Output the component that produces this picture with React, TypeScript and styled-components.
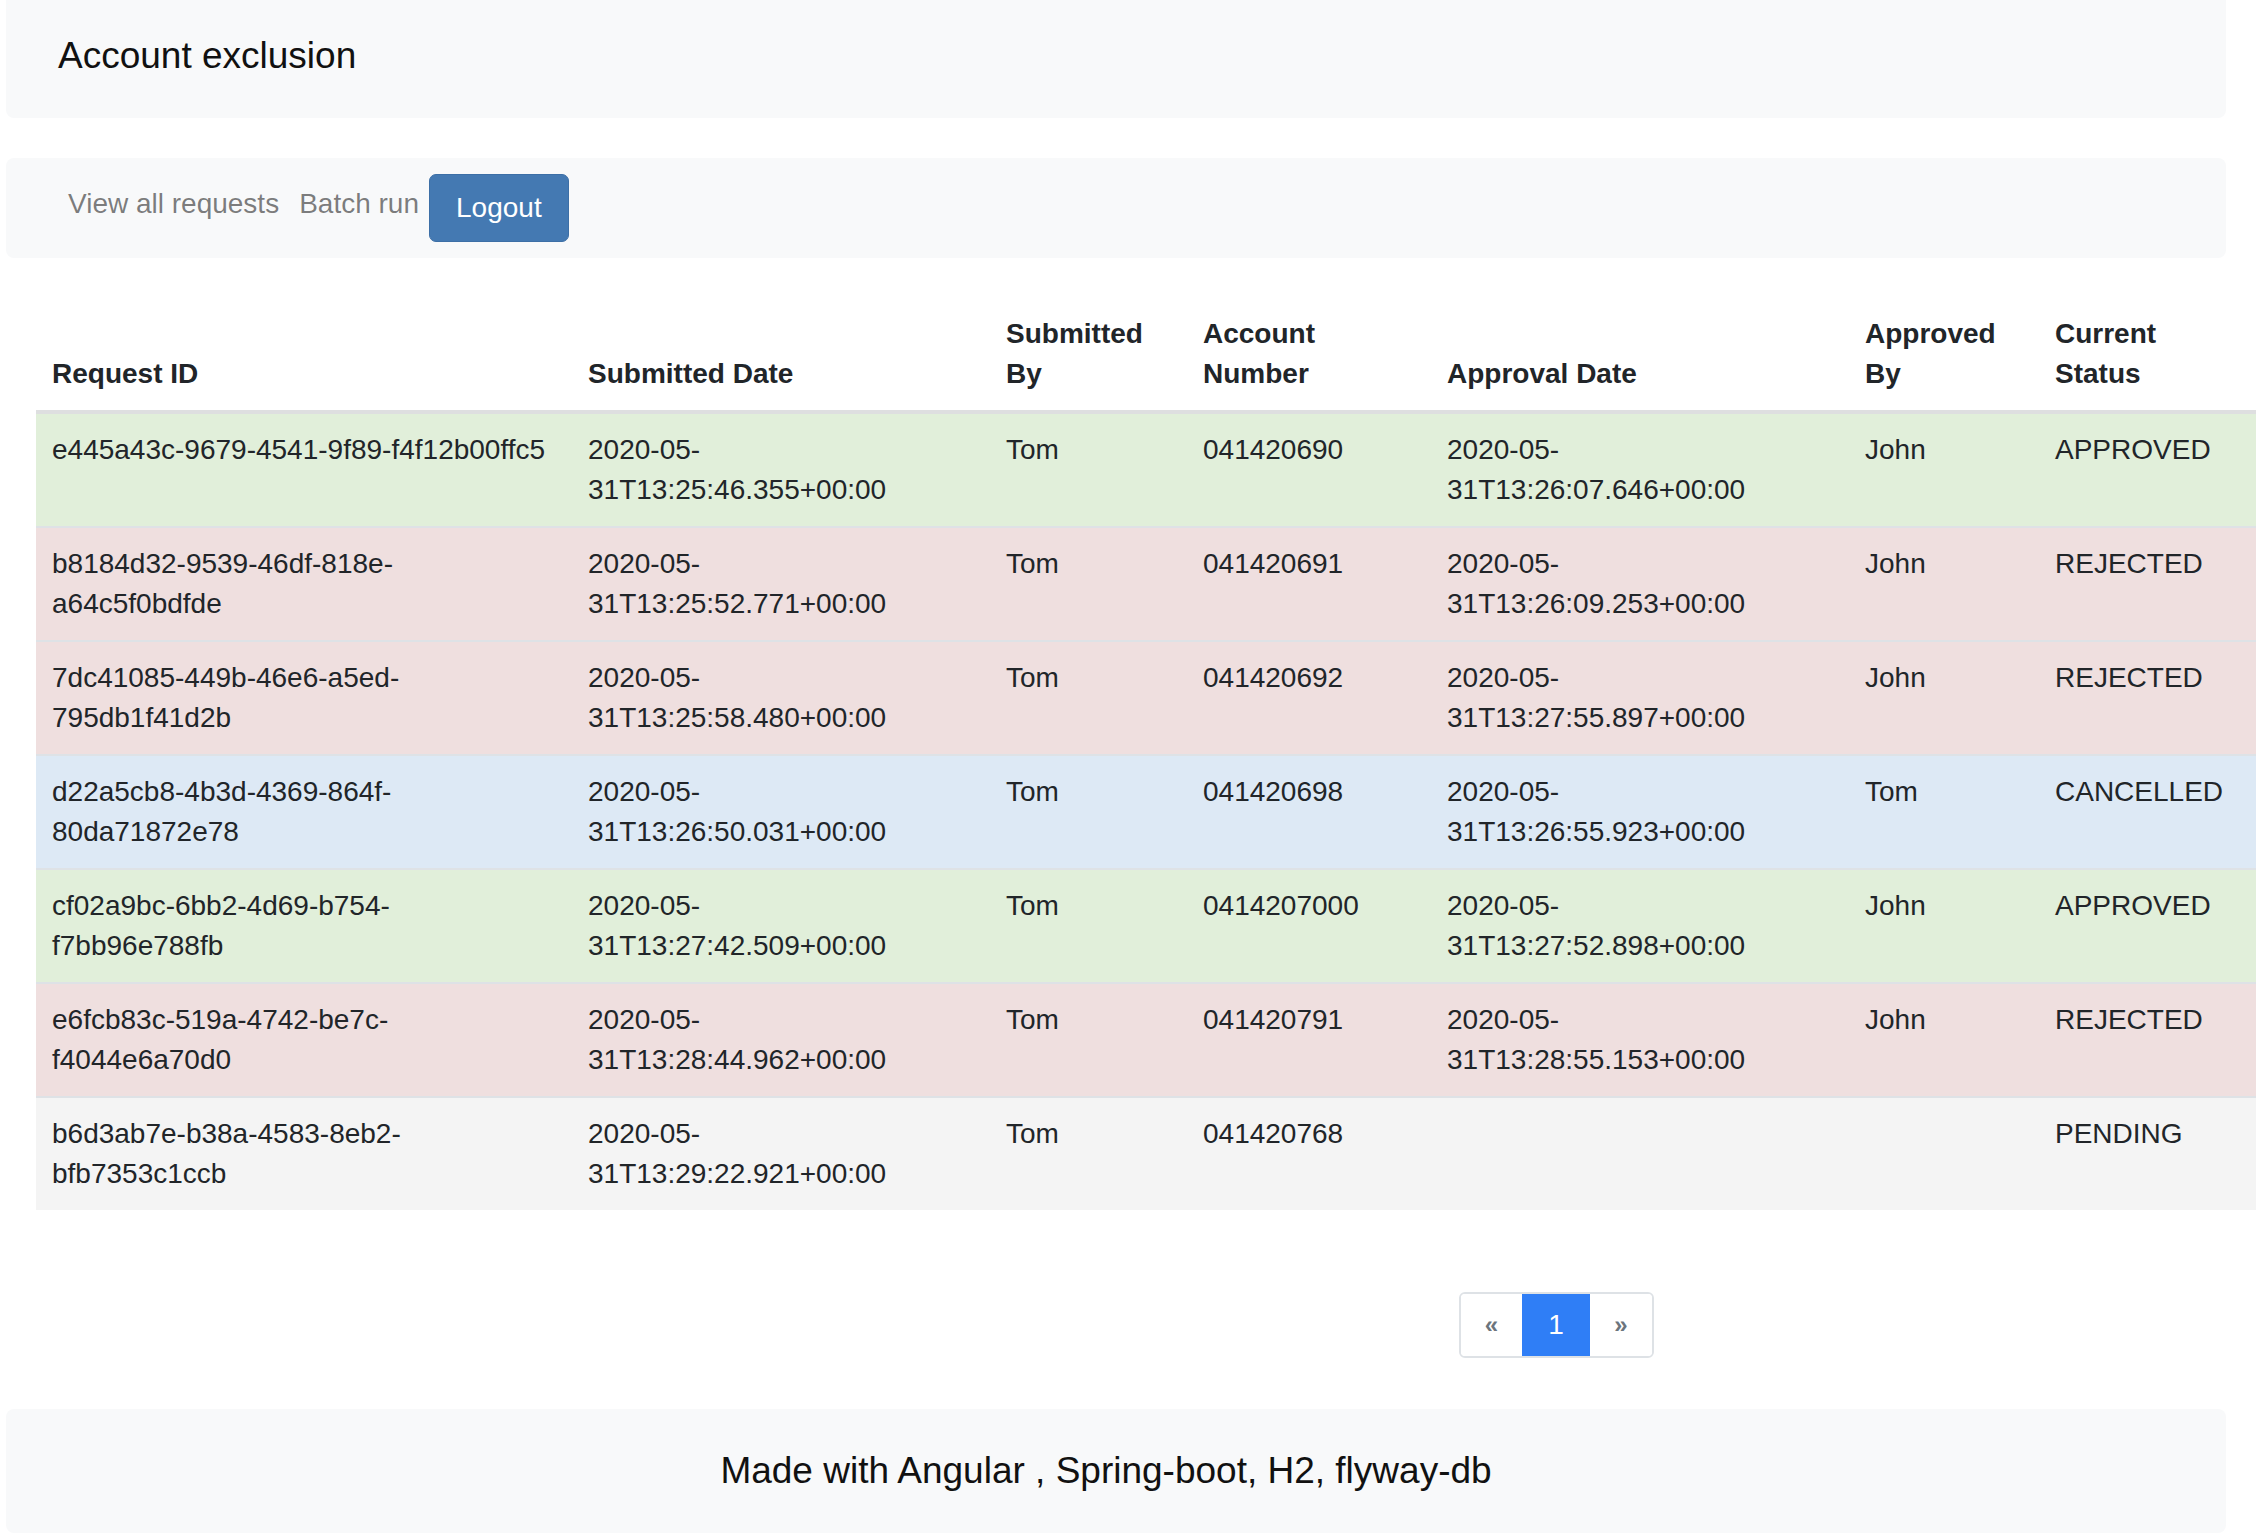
import React from "react";
import styled, { createGlobalStyle } from "styled-components";

const GlobalStyle = createGlobalStyle`
  html, body {
    margin: 0;
    padding: 0;
    background: #ffffff;
  }
  body {
    font-family: "Liberation Sans", Arial, Helvetica, sans-serif;
    color: #212529;
    overflow: hidden;
  }
`;

const Page = styled.div`
  width: 2260px;
  padding-left: 6px;
  box-sizing: border-box;
`;

const Header = styled.header`
  width: 2220px;
  height: 118px;
  box-sizing: border-box;
  background: #f8f9fa;
  border-radius: 0 0 8px 8px;
  padding: 34px 0 0 52px;
`;

const Title = styled.h1`
  margin: 0;
  font-size: 37px;
  line-height: 43px;
  font-weight: 400;
  color: #111;
`;

const NavBar = styled.nav`
  width: 2220px;
  height: 100px;
  margin-top: 40px;
  box-sizing: border-box;
  background: #f8f9fa;
  border-radius: 8px;
  padding-left: 52px;
  display: flex;
  align-items: center;
`;

const NavLink = styled.a`
  font-size: 28px;
  line-height: 40px;
  padding: 0 10px 8px;
  color: rgba(0, 0, 0, 0.52);
  text-decoration: none;
  cursor: pointer;
`;

const LogoutButton = styled.button`
  height: 68px;
  padding: 0 26px;
  font-family: inherit;
  font-size: 28px;
  color: #fff;
  background: #4479b2;
  border: 1px solid #3d6fa6;
  border-radius: 7px;
  display: inline-flex;
  align-items: center;
  cursor: pointer;
`;

const TableWrap = styled.section`
  margin-top: 40px;
  margin-left: 30px;
  width: 2220px;
`;

const Table = styled.table`
  width: 2220px;
  border-collapse: separate;
  border-spacing: 0;
  table-layout: fixed;
  font-size: 28px;
  line-height: 40px;
  color: #212529;

  tbody tr + tr td {
    border-top: 2px solid #dee2e6;
  }
`;

const HeadCell = styled.th`
  text-align: left;
  vertical-align: bottom;
  font-weight: 700;
  padding: 16px 16px;
  border-bottom: 4px solid #dedfe0;
`;

const rowColors: Record<string, string> = {
  APPROVED: "#e1efda",
  REJECTED: "#efdfdf",
  CANCELLED: "#dde9f5",
  PENDING: "#f4f4f4",
};

const Row = styled.tr<{ $status: string }>`
  background: ${(p) => rowColors[p.$status] || "#fff"};
`;

const Cell = styled.td`
  vertical-align: top;
  padding: 16px 16px;
`;

const PagerRow = styled.div`
  margin-top: 82px;
  display: flex;
`;

const Pager = styled.ul`
  list-style: none;
  margin: 0 0 0 1423px;
  padding: 0;
  display: flex;
  border: 2px solid #dee2e6;
  border-radius: 6px;
  overflow: hidden;
  height: 66px;
  box-sizing: border-box;
`;

const PageItem = styled.li<{ $active?: boolean; $w: number }>`
  width: ${(p) => p.$w}px;
  display: flex;
  align-items: center;
  justify-content: center;
  font-size: ${(p) => (p.$active ? "28px" : "24px")};
  font-weight: ${(p) => (p.$active ? 400 : 700)};
  color: ${(p) => (p.$active ? "#fff" : "#6c757d")};
  background: ${(p) => (p.$active ? "#2f7ef6" : "#fff")};
  margin: ${(p) => (p.$active ? "-2px 0" : "0")};
  cursor: pointer;
`;

const Footer = styled.footer`
  width: 2220px;
  height: 124px;
  margin-top: 51px;
  box-sizing: border-box;
  background: #f8f9fa;
  border-radius: 8px;
  padding-right: 20px;
  display: flex;
  align-items: center;
  justify-content: center;
  font-size: 37px;
  color: #111;
`;

type Req = {
  id: string;
  submitted: string;
  by: string;
  account: string;
  approval: string;
  approvedBy: string;
  status: string;
};

const data: Req[] = [
  { id: "e445a43c-9679-4541-9f89-f4f12b00ffc5", submitted: "2020-05-31T13:25:46.355+00:00", by: "Tom", account: "041420690", approval: "2020-05-31T13:26:07.646+00:00", approvedBy: "John", status: "APPROVED" },
  { id: "b8184d32-9539-46df-818e-a64c5f0bdfde", submitted: "2020-05-31T13:25:52.771+00:00", by: "Tom", account: "041420691", approval: "2020-05-31T13:26:09.253+00:00", approvedBy: "John", status: "REJECTED" },
  { id: "7dc41085-449b-46e6-a5ed-795db1f41d2b", submitted: "2020-05-31T13:25:58.480+00:00", by: "Tom", account: "041420692", approval: "2020-05-31T13:27:55.897+00:00", approvedBy: "John", status: "REJECTED" },
  { id: "d22a5cb8-4b3d-4369-864f-80da71872e78", submitted: "2020-05-31T13:26:50.031+00:00", by: "Tom", account: "041420698", approval: "2020-05-31T13:26:55.923+00:00", approvedBy: "Tom", status: "CANCELLED" },
  { id: "cf02a9bc-6bb2-4d69-b754-f7bb96e788fb", submitted: "2020-05-31T13:27:42.509+00:00", by: "Tom", account: "0414207000", approval: "2020-05-31T13:27:52.898+00:00", approvedBy: "John", status: "APPROVED" },
  { id: "e6fcb83c-519a-4742-be7c-f4044e6a70d0", submitted: "2020-05-31T13:28:44.962+00:00", by: "Tom", account: "041420791", approval: "2020-05-31T13:28:55.153+00:00", approvedBy: "John", status: "REJECTED" },
  { id: "b6d3ab7e-b38a-4583-8eb2-bfb7353c1ccb", submitted: "2020-05-31T13:29:22.921+00:00", by: "Tom", account: "041420768", approval: "", approvedBy: "", status: "PENDING" },
];

const columns = [536, 418, 197, 244, 418, 190, 217];
const headings = ["Request ID", "Submitted Date", "Submitted By", "Account Number", "Approval Date", "Approved By", "Current Status"];

// allow wrapping after hyphens, as the original browser did
const Breakable: React.FC<{ text: string }> = ({ text }) => {
  const parts = text.split("-");
  return (
    <>
      {parts.map((p, i) => (
        <React.Fragment key={i}>
          {p}
          {i < parts.length - 1 ? "-" : ""}
          {i < parts.length - 1 ? <wbr /> : null}
        </React.Fragment>
      ))}
    </>
  );
};

export default function App() {
  return (
    <>
      <GlobalStyle />
      <Page>
        <Header>
          <Title>Account exclusion</Title>
        </Header>
        <NavBar>
          <NavLink>View all requests</NavLink>
          <NavLink>Batch run</NavLink>
          <LogoutButton>Logout</LogoutButton>
        </NavBar>
        <TableWrap>
          <Table>
            <colgroup>
              {columns.map((w, i) => (
                <col key={i} style={{ width: w }} />
              ))}
            </colgroup>
            <thead>
              <tr>
                {headings.map((h) => (
                  <HeadCell key={h}>{h}</HeadCell>
                ))}
              </tr>
            </thead>
            <tbody>
              {data.map((r) => (
                <Row key={r.id} $status={r.status}>
                  <Cell><Breakable text={r.id} /></Cell>
                  <Cell><Breakable text={r.submitted} /></Cell>
                  <Cell>{r.by}</Cell>
                  <Cell>{r.account}</Cell>
                  <Cell><Breakable text={r.approval} /></Cell>
                  <Cell>{r.approvedBy}</Cell>
                  <Cell>{r.status}</Cell>
                </Row>
              ))}
            </tbody>
          </Table>
          <PagerRow>
            <Pager>
              <PageItem $w={61}>«</PageItem>
              <PageItem $w={68} $active>1</PageItem>
              <PageItem $w={62}>»</PageItem>
            </Pager>
          </PagerRow>
        </TableWrap>
        <Footer>Made with Angular , Spring-boot, H2, flyway-db</Footer>
      </Page>
    </>
  );
}
